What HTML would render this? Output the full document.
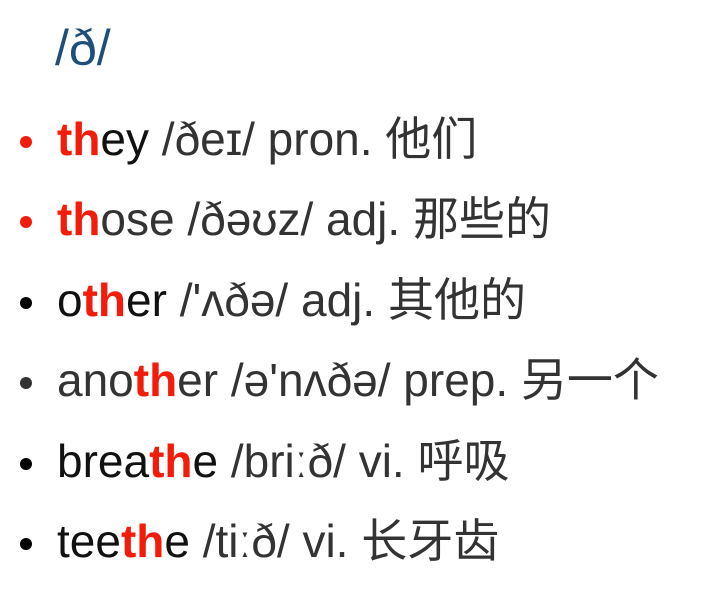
<!DOCTYPE html>
<html><head><meta charset="utf-8"><style>
body{margin:0;width:702px;height:593px;background:#fff;overflow:hidden;font-family:"Liberation Sans","Noto Sans CJK SC",sans-serif;}
h1{position:absolute;left:55px;top:18px;margin:0;font-weight:normal;font-size:50px;color:#1f4e79;line-height:60px;}
.r{position:absolute;left:57px;font-size:46px;color:#333;white-space:nowrap;line-height:54px;}
.r::before{content:"";position:absolute;left:-37px;top:24px;width:12px;height:12px;border-radius:50%;background:var(--b,#000);}
b{color:#f21c0a;}
.k{color:#111}
</style></head><body>
<h1>/ð/</h1>
<div class="r" style="top:112px;--b:#f21c0a"><b>th</b><span class="k">ey</span> /ðeɪ/ pron. 他们</div>
<div class="r" style="top:192px;--b:#f21c0a"><b>th</b>ose /ðəʊz/ adj. 那些的</div>
<div class="r" style="top:273px"><span class="k">o</span><b>th</b><span class="k">er</span> /'ʌðə/ adj. 其他的</div>
<div class="r" style="top:353px;--b:#333">ano<b>th</b>er /ə'nʌðə/ prep. 另一个</div>
<div class="r" style="top:434px"><span class="k">brea</span><b>th</b><span class="k">e</span> /briːð/ vi. 呼吸</div>
<div class="r" style="top:514px"><span class="k">tee</span><b>th</b><span class="k">e</span> /tiːð/ vi. 长牙齿</div>
</body></html>
